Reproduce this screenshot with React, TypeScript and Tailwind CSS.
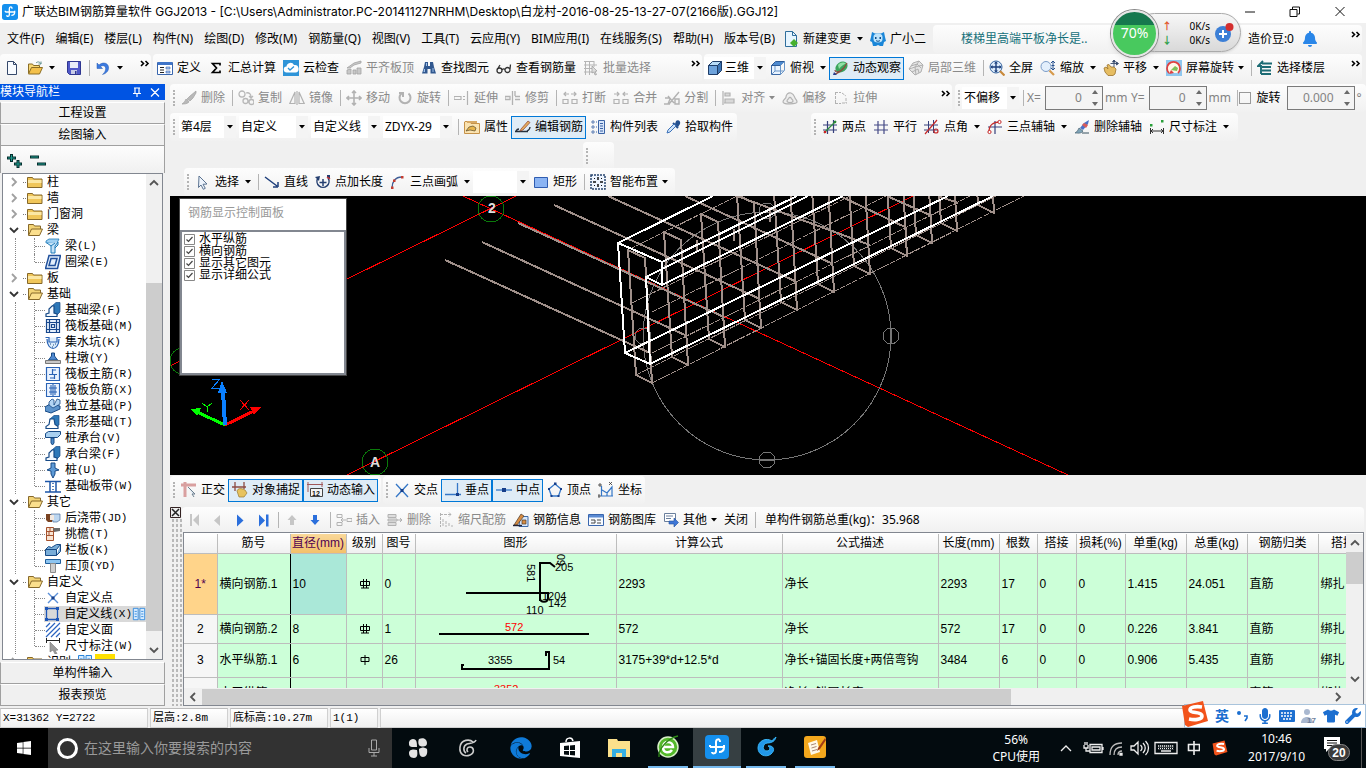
import type { ReactNode } from "react";
import { FaBell, FaEdge, FaMicrophone, FaTshirt, FaWindows, FaWrench } from "react-icons/fa";

const icons: Record<string, ReactNode> = {
  file: <path d="M3.5 1.5h6l3 3v10h-9zM9.5 1.5v3h3" fill="#f8fbff" stroke="#36496b" />,
  open: (
    <>
      <path d="M1.5 13V4h4l1 1.5h6V8" fill="#f7d774" stroke="#8a6d25" />
      <path d="M1.5 14l3-6.5h11L12.500 14z" fill="#f3c04b" stroke="#8a6d25" />
      <path d="M9 3c2-2 4-1 5 1m0-2.500V4h-2.500" fill="none" stroke="#5f8f8f" />
    </>
  ),
  save: (
    <>
      <path d="M1.500 1.500h13v13h-11l-2-2z" fill="#5058c8" stroke="#2f3690" />
      <path d="M4 2h8v6H4z" fill="#e8ecf8" />
      <path d="M5 10h6v4H5z" fill="#c8cce8" />
      <path d="M9 11h1.500v3H9z" fill="#2f3690" />
    </>
  ),
  undo: <path d="M2 3v5.500h5.500L5.500 6.500c3-2 6 0 5 3.500-.5 2-2 3.500-3 4.500 4-1 6.500-4 6-7.500C13 3 8 1.500 4 5z" fill="#3c7be0" stroke="#2459b0" strokeWidth=".5" />,
  define: (
    <>
      <path d="M.5 2.500h15v12H.5z" fill="#fff" stroke="#3966ae" />
      <path d="M1 2h14v3H1z" fill="#3f74c8" />
      <path d="M3 7.500h4M3 10h4M3 12.500h4" stroke="#222" />
      <path d="M9 7h4v2H9zM9 11h4v2H9z" fill="#a9c3ee" stroke="#3966ae" strokeWidth=".6" />
    </>
  ),
  sigma: <path d="M12 5.500V3.500H4.500L8.500 8l-4 4.500H12v-2" fill="none" stroke="#000" strokeWidth="1.700" />,
  cloud: (
    <>
      <path d="M0 0h16v16H0z" fill="#2e94d8" />
      <path d="M4 12.500a3 3 0 0 1-.5-6 4 4 0 0 1 7.500-1.500 3.500 3.500 0 0 1 1.500 7.500z" fill="#fff" />
      <path d="M5 8l2 2 4-3.500" stroke="#2e94d8" fill="none" strokeWidth="1.300" />
    </>
  ),
  slab: <path d="M1 8l7-5 7-2v2L8 5 4 8zM1 10l4-1v5H1zM7 10h3v4H7zM11 8h4v6h-4z" fill="#c8c8c8" stroke="#a2a2a2" strokeWidth=".8" />,
  binoc: (
    <>
      <path d="M4 2h3v4h2V2h3l1 5 2 6.500H9.500V9h-3v4.500H1L3 7z" fill="#31588f" />
      <path d="M3 9h1v3H2.500zM11.500 8h1v4h-1zM5 3h1v3H5z" fill="#9fc0ea" />
    </>
  ),
  glasses: <path d="M1 10.500a2.300 2.300 0 1 0 5 0 2.300 2.300 0 1 0-5 0zm8-.5a2.300 2.300 0 1 0 5 0 2.300 2.300 0 1 0-5 0zM6 10c1-1.500 2-1.500 3-.5M1.500 9L4 5M14 9l.5-4.500" fill="none" stroke="#333" strokeWidth="1.300" />,
  batch: (
    <>
      <path d="M1 1.500h10M1 5h13M1 8.500h8M1 12h8M2.500 1v14M6.500 1v14M11 1v6" stroke="#b5b5b5" />
      <path d="M9 6l5 5-2 .5 1.500 3-1.500.5-1-3-2 1z" fill="#ddd" stroke="#999" strokeWidth=".7" />
    </>
  ),
  cube: (
    <>
      <path d="M1.500 5.500h9v9h-9z" fill="#6ea3dc" stroke="#1f3d68" />
      <path d="M1.500 5.500l4-4h9l-4 4z" fill="#b8dcf8" stroke="#1f3d68" />
      <path d="M10.500 5.500l4-4v9l-4 4z" fill="#3d75b5" stroke="#1f3d68" />
    </>
  ),
  cubetop: (
    <>
      <path d="M1.500 5.500h9v9h-9z" fill="#eaf4ff" stroke="#3c69a5" />
      <path d="M1.500 5.500l4-4h9l-4 4z" fill="#4d8ad0" stroke="#2e5a95" />
      <path d="M10.500 5.500l4-4v9l-4 4zM5 6v5m0 0h9M5 11l-3 3" fill="none" stroke="#6a96c8" />
    </>
  ),
  orbit: (
    <>
      <ellipse cx="8.500" cy="7" rx="6.500" ry="5" fill="#3aa45c" transform="rotate(-35 8.500 7)" />
      <path d="M5 5c3-3 6-3 8-1-2 0-5 2-7 5z" fill="#8fe0a5" />
      <path d="M1 14c4 0 10-5 13-11M2 10c0 3 5 2 8-1" fill="none" stroke="#8c4a3c" strokeWidth="1.200" />
      <path d="M1 12l3 3H0z" fill="#2b3c8a" />
    </>
  ),
  cubegray: <path d="M1 9l4-6 6-2 4 4-2 7-6 3zM1 9l6-2 4-6M7 7l1 8M7 7l8-2M3 6l6-2 4 4M4 12l6-3 1 4" fill="#e4e4e4" stroke="#b0b0b0" />,
  full: (
    <>
      <circle cx="7" cy="7" r="6" fill="#dcebfb" stroke="#34639f" />
      <path d="M11 11l4.500 4.500" stroke="#c8893a" strokeWidth="2.200" />
      <path d="M7 2v10M2 7h10" stroke="#1b3f7c" strokeWidth="1.400" />
      <path d="M7 1.500l2 2H5zM7 12.500l2-2H5zM1.500 7l2-2v4zM12.500 7l-2-2v4z" fill="#1b3f7c" />
    </>
  ),
  zoom: (
    <>
      <circle cx="6" cy="6.500" r="5" fill="#e3effc" stroke="#7a9cc8" />
      <path d="M9.500 10.500L14 15" stroke="#d69a4c" strokeWidth="2.200" />
      <path d="M13 1v8M11 3l2-2 2 2M11.500 5.500h3M11 8l2 2 2-2" stroke="#27508e" fill="none" />
    </>
  ),
  hand: (
    <>
      <path d="M1 8l2-1 2 2-1-4 2-.5L8 7l3 0 2 2-1 5-2 1.500H5L2 12z" fill="#e6bd62" stroke="#9c742c" strokeWidth=".8" />
      <path d="M11 0v7M7.500 3.500h7M11 0L9.500 2h3zM15.500 3.500L13.500 2v3z" stroke="#35496b" fill="#35496b" strokeWidth=".9" />
    </>
  ),
  screenrot: (
    <>
      <path d="M0 0h16v16H0z" fill="#8fc7ee" />
      <path d="M3 13a6.500 6.500 0 1 1 9 0" fill="#fff7e8" stroke="#e04040" strokeWidth="1.800" />
      <path d="M5 10l4-4 3 2-1 3z" fill="#7fbf57" />
      <path d="M3 14l5-1-3-3z" fill="#e04040" />
    </>
  ),
  floors: <path d="M5 3.500h10M5 7h9M5 10.500h9M4 14h10M6 1L1 6h3v8" fill="none" stroke="#1c6b74" strokeWidth="1.900" />,
  erase: <path d="M15 1L9 6 6 9l3 2 3-3 3-5zM5 9l3 3c-2 2-5 2-7 2 2-1 3-3 4-5z" fill="#b9b9b9" stroke="#a2a2a2" strokeWidth=".7" />,
  copy: <path d="M1 4a3 3 0 1 0 6 0 3 3 0 1 0-6 0M5 11a2.500 2.500 0 1 0 5 0 2.500 2.500 0 1 0-5 0M11 12a2.500 2.500 0 1 0 5 0 2.500 2.500 0 1 0-5 0M8 3c3-1 5 1 5 4m-2-1l2 2 2-2" fill="none" stroke="#b8b8b8" strokeWidth="1.300" />,
  mirror: <path d="M6 2v11.500H.8zM10 2v11.500h5.200zM8 1v14" fill="none" stroke="#b2b2b2" strokeWidth="1.200" />,
  move: <path d="M8 1v14M1 8h14M6 3l2-2 2 2M6 13l2 2 2-2M3 6L1 8l2 2M13 6l2 2-2 2" fill="none" stroke="#b2b2b2" strokeWidth="1.600" />,
  rotate: <path d="M4.500 3.500a5.500 5.500 0 1 0 7 0M2 3h4v4" fill="none" stroke="#b2b2b2" strokeWidth="2" />,
  extend: <path d="M0 6.500h7v3H0zM9 6.500h2M9 9.500h2M13.500 1v14" fill="none" stroke="#b2b2b2" strokeWidth="1.200" />,
  trim: <path d="M0 6.500h5v3H0zM7.500 1v14M10 6.500h5M10 9.500h5M10 1v5" fill="none" stroke="#b2b2b2" strokeWidth="1.300" />,
  break: <path d="M1 9.500h5v4H1zM10 9.500h5v4h-5zM7 4H2m2-2L2 4l2 2M9 4h5m-2-2l2 2-2 2" fill="none" stroke="#b2b2b2" strokeWidth="1.200" />,
  merge: <path d="M1 9.500h5v4H1zM10 9.500h5v4h-5zM1 4h5m-2-2l2 2-2 2M15 4h-5m2-2l-2 2 2 2" fill="none" stroke="#b2b2b2" strokeWidth="1.200" />,
  split: <path d="M5 14L15 2M10 13L4 6M1 8h5M0 14h6M11 9h4v5h-4zM6 9L4 14" fill="none" stroke="#b2b2b2" strokeWidth="1.400" />,
  align: <path d="M2 1v14M4 3h5v3H4zM4 9h9v4H4zM3 13h8" fill="#d8d8d8" stroke="#b2b2b2" strokeWidth="1.200" />,
  offset: <path d="M1 12c0-3 3-3 3-5s2-5 5-4 3 3 4 5 2 2 2 4-14 3-14 0zM5 11c0-2 2-2 2-3s2-1 2 0 2 1 2 3-6 2-6 0z" fill="#eee" stroke="#b2b2b2" strokeWidth="1.200" />,
  stretch: <path d="M2.500 2v12M2 2.500h6M2 13.500h6M9 3l4 3M9 13h5M13 8v5" fill="none" stroke="#b2b2b2" strokeDasharray="3 1" />,
  props: (
    <>
      <path d="M.5 3V14.500h15V4.500H7L6 2.500H1z" fill="#fbe3b0" stroke="#c5924a" />
      <path d="M3 2h10v2H3z" fill="#d8a964" />
      <path d="M2 12l3-4 4-1 3 2-1 3-5-1z" fill="#e8b54c" stroke="#55482a" strokeWidth=".7" />
    </>
  ),
  editbar: (
    <>
      <path d="M0 12.500h13M1 12c1-2 2-2 3-2M12 12c2-1 3-3 3-4" stroke="#27303c" fill="none" strokeWidth="1.300" />
      <path d="M6 10L13 2l2 1.500-7 7.500-3 1z" fill="#e4ad5c" stroke="#8e3f30" strokeWidth=".7" />
    </>
  ),
  list: (
    <>
      <path d="M2 2h2v2H2zM2 7h2v2H2zM2 12h2v2H2z" fill="#fff" stroke="#3a63a5" strokeWidth=".8" />
      <path d="M6 3h1M6 8h1M6 13h1" stroke="#3a63a5" />
      <path d="M8.500 1.500h6v13h-6z" fill="#d7e5fa" stroke="#3a63a5" />
      <path d="M10 4.500h3M10 7h3M10 9.500h3M10 12h3" stroke="#3a63a5" />
    </>
  ),
  pick: (
    <>
      <path d="M10 5l3 3 2-3c1-3-2-5-4-3z" fill="#24508f" />
      <path d="M8 4l5 5" stroke="#24508f" strokeWidth="2" />
      <path d="M2 14l1-3 6-6 2 2-6 6z" fill="#cfe4fa" stroke="#3c71b8" />
    </>
  ),
  axis2: (
    <>
      <path d="M5.500 2v13M11.500 1v13M1 6h14M1 11h14" stroke="#36407c" strokeWidth="1.200" />
      <path d="M2 14L14 2" stroke="#2f8f3f" strokeWidth="1.200" />
      <circle cx="3" cy="13" r="1.300" fill="#c22" />
      <circle cx="13" cy="3" r="1.300" fill="#2a8a35" />
    </>
  ),
  parallel: <path d="M5 2v13M11 1v14M1 6h14M1 11h14" stroke="#454a86" strokeWidth="1.200" />,
  corner: (
    <>
      <path d="M4.500 2v12M9.500 1v13M0 6h14M0 11h14" stroke="#36407c" />
      <path d="M1 15L13 1M10 12a2 2 0 1 0 4 0 2 2 0 1 0-4 0" fill="none" stroke="#c52a2a" strokeWidth="1.200" />
    </>
  ),
  arcaxis: (
    <>
      <path d="M8 2v13M1 8h14" stroke="#36407c" strokeWidth="1.200" />
      <path d="M2 13C2 6 6 3 13 3" fill="none" stroke="#c52a2a" strokeWidth="1.300" />
      <circle cx="2.500" cy="13" r="1.600" fill="#fff" stroke="#c52a2a" />
      <circle cx="12.500" cy="3" r="1.600" fill="#fff" stroke="#c52a2a" />
    </>
  ),
  delaxis: (
    <>
      <path d="M15 1L10 4 6 9l3 2 5-6z" fill="#4c71c8" />
      <path d="M10 4l4 2-2 3-4-3z" fill="#d85b5b" />
      <path d="M5 9l4 3c-2 3-5 2-8 2 2-1 3-3 4-5z" fill="#7fa4b8" stroke="#36505f" strokeWidth=".6" />
      <path d="M8 14h7" stroke="#36505f" />
    </>
  ),
  dim: (
    <>
      <path d="M1.500 9v6M14.500 9v6M2 12h12M4 10l-2 2 2 2M12 10l2 2-2 2" fill="none" stroke="#333" />
      <path d="M1 5h2.500v2.500H1zM12 1h2.500v2.500H12z" fill="#2aa03a" />
    </>
  ),
  cursor: <path d="M4 2l8 8-4 .3 2.300 4-2 1L6 11l-2.500 2.500z" fill="#eef4fc" stroke="#5b7391" />,
  line: <path d="M1 3l12 9m1 1V8m0 5H9" fill="none" stroke="#1f3f7c" strokeWidth="1.500" />,
  ptlen: (
    <>
      <path d="M3 4a6 6 0 1 0 10 0M8 5v7M4.500 8.500h7" fill="none" stroke="#253f70" strokeWidth="1.500" />
      <path d="M0 3l5-1-1 5zM12 1h3v3h-3z" fill="#253f70" />
      <path d="M12 3l3 2" stroke="#c33" strokeWidth="1.500" />
    </>
  ),
  arc3: (
    <>
      <path d="M2 14C2 8 5 3 12 3" fill="none" stroke="#3f5f98" strokeWidth="1.300" />
      <path d="M1 12.500h2.500V15H1zM3 5.500h2.500V8H3zM11 2h2.500v2.500H11z" fill="#c33d30" />
    </>
  ),
  rect: <path d="M1.500 3.500h13v10h-13z" fill="#8bb4f3" stroke="#2f5cb0" />,
  smart: (
    <>
      <path d="M1 1h14v14H1z" fill="#eef5ff" stroke="#28466f" strokeDasharray="2 1" strokeWidth="1.500" />
      <path d="M8 3v3M8 10v3M3 8h3M10 8h3" stroke="#111" strokeWidth="1.500" />
      <path d="M4 4h1v1H4zM11 4h1v1h-1zM4 11h1v1H4zM11 11h1v1h-1z" fill="#111" />
    </>
  ),
  newdoc: (
    <>
      <path d="M2.500 .5h7l4 4v11h-11z" fill="#e7f5ff" stroke="#2f6e9c" />
      <path d="M9.500 .5v4h4" fill="none" stroke="#2f6e9c" />
      <path d="M11 8l4 4-4 4-4-4z" fill="#47b02e" />
    </>
  ),
  mascot: (
    <>
      <path d="M2 1l3 1.500h6L14 1l1 5 1 4-2 1-1 4h-3l-2-1-2 1H3l-1-4-2-1 1-4z" fill="#1a86d8" />
      <path d="M3.500 6a4.500 3.500 0 0 1 9 0v2a4.500 3.500 0 0 1-9 0z" fill="#bfe3fa" />
      <path d="M5 6h1.500v2H5zM9.500 6H11v2H9.500z" fill="#0d4f8c" />
      <path d="M6 9.500c1 1 3 1 4 0" stroke="#0d4f8c" fill="none" />
    </>
  ),
  ortho: (
    <>
      <path d="M0 3h15M4 0v15" stroke="#d9a0a0" strokeWidth="3" />
      <path d="M7 5l7 7-3 0 2 3" fill="#dfe8f0" stroke="#6c7f8f" />
    </>
  ),
  snap: (
    <>
      <path d="M0 5h14M3 0v9M12 0v7" stroke="#8d4b43" strokeWidth="1.300" />
      <path d="M5 9c1-3 4-3 8-1l2 3-3 4H7z" fill="#e8c35e" stroke="#9a7a30" strokeWidth=".7" />
    </>
  ),
  dyn: (
    <>
      <path d="M0 2.500h16M1 0v10M15 0v5" stroke="#a0585a" />
      <path d="M3.500 6.500h12v8h-12z" fill="#f4f4f4" stroke="#444" />
      <text x="5" y="13.500" fontSize="7" fontWeight="700" fill="#111" fontFamily="Liberation Sans">12</text>
    </>
  ),
  cross: (
    <>
      <path d="M2 2l12 13M14 2L2 15" stroke="#3577c7" strokeWidth="1.300" />
      <path d="M6.500 7h3v3h-3z" fill="#173f8a" />
    </>
  ),
  perp: (
    <>
      <path d="M0 12.500h16M12.500 1v11" stroke="#3577c7" strokeWidth="1.300" />
      <path d="M11 11h3v3h-3z" fill="#173f8a" />
    </>
  ),
  mid: (
    <>
      <path d="M0 8h16" stroke="#3577c7" strokeWidth="1.300" />
      <path d="M6 6h4v4H6z" fill="#173f8a" />
    </>
  ),
  vertex: (
    <>
      <path d="M8 2l6 5-2.500 7h-7L2 7z" fill="none" stroke="#3577c7" strokeWidth="1.300" />
      <path d="M7 .5h2.500V3H7zM1 6h2v2H1zM13 6h2v2h-2zM3.500 13h2v2h-2zM10.500 13h2v2h-2z" fill="#173f8a" />
    </>
  ),
  coord: (
    <>
      <path d="M3.500 4v10H15M4 8l5 3 5-6v9M9 11v3" fill="none" stroke="#3577c7" strokeWidth="1.200" />
      <path d="M1 2h2v2H1zM11 0l3 3m0-3l-3 3M0 13h2v2H0z" fill="none" stroke="#333" strokeWidth=".8" />
    </>
  ),
  first: <path d="M4 2h2v12H4zM13 2v12L7 8z" fill="#c6c6c6" />,
  prev: <path d="M11 3v11L5 8.500z" fill="#c6c6c6" />,
  next: <path d="M5 2.500v12L11.500 8.500z" fill="#2b6fdc" />,
  last: <path d="M4 2.500v12l6-6zM11 2.500h2.500v12H11z" fill="#2b6fdc" />,
  up: <path d="M8 3l4.500 5H10v5H6V8H3.500z" fill="#c6c6c6" />,
  down: <path d="M8 13l4.500-5H10V3H6v5H3.500z" fill="#2b6fdc" />,
  insert: <path d="M1 2.500h5v3H1zM1 10.500h5v3H1zM11 6.500h5v3h-5zM5 8h5M7 6L5 8l2 2" fill="none" stroke="#b2b2b2" />,
  remove: <path d="M1 2.500h8v3H1zM1 10.500h8v3H1zM1 7h9v2H1zM10 8h5m-2-2l2 2-2 2" fill="#ddd" stroke="#b2b2b2" />,
  scale: <path d="M2.500 1v14M2 2.500h11m-2-2l2 2-2 2M5 7v8M8 9v6M11 11v4M14 13v2" fill="none" stroke="#b2b2b2" strokeDasharray="3 1" />,
  info: (
    <>
      <path d="M7 4.500h8v10H6z" fill="#d9e8fb" stroke="#3e6aa8" />
      <path d="M1 13L8 2l3 2-7 9zM9 8h4v4H9z" fill="#d88c42" stroke="#4c3b2c" strokeWidth=".7" />
      <path d="M0 13.500h9" stroke="#223" strokeWidth="1.400" />
    </>
  ),
  library: (
    <>
      <path d="M.5 2.500h15v11H.5z" fill="#f6faff" stroke="#3966ae" />
      <path d="M1 3h14v2.500H1z" fill="#5b8ad2" />
      <path d="M3 11h4V8H3M9 8h4M9 11h4" fill="none" stroke="#444" />
    </>
  ),
  other: (
    <>
      <path d="M1.500 1.500h11v8h-11z" fill="#fff" stroke="#6a7f9c" />
      <path d="M3 4h7M3 6.500h5" stroke="#6a7f9c" />
      <path d="M6 9h5V6l4.500 4.500L11 15v-3H6z" fill="#3f77d6" stroke="#24509c" strokeWidth=".6" />
    </>
  ),
  folder: (
    <>
      <path d="M.5 13.500v-10h5l1 1.500h8.500v8.500z" fill="#f0c65a" stroke="#86682a" />
      <path d="M1 6h13.500v3H1z" fill="#fbe7a4" />
    </>
  ),
  folderopen: (
    <>
      <path d="M1.500 13V2.500h5l1 1.500h6V7" fill="#f3d477" stroke="#86682a" />
      <path d="M1.500 13.500l3-6.500h11l-3 6.500z" fill="#fbdf8d" stroke="#86682a" />
    </>
  ),
  beam: (
    <>
      <path d="M1 3l3-2h10l-2 4H1z" fill="#9fd0f2" stroke="#1c7ab8" strokeWidth=".8" />
      <path d="M2 5l4 3v7h4V8l3-4M6 8l4-3M10 10l3-3V4" fill="#c5e2f7" stroke="#1c7ab8" />
    </>
  ),
  ring: <path d="M4 1.500h11.500l-3 13H.5zM6 4.500h6l-2 7H4z" fill="#e3effb" stroke="#20509c" strokeWidth="1.500" />,
  fbeam: (
    <>
      <path d="M7 4l4-3.500h4V10l-4 4H7z" fill="#2e78b8" stroke="#174a86" strokeWidth=".7" />
      <path d="M1 14.500V12l3-1V7l3-3h2v7l3 1v2.500z" fill="#f3f9ff" stroke="#174a86" strokeWidth="1.200" />
    </>
  ),
  raft: <path d="M1.500 1.500h13v13h-13zM4.500 1v14M11.500 1v14M1 4.500h14M1 11.500h14M6.500 6.500h3v3h-3z" fill="#e6f1fd" stroke="#17478c" strokeWidth="1.200" />,
  pit: (
    <>
      <path d="M.5 3.500H4V8h8V3.500h3.500M2 5c0 6 3 9.500 6 9.500S14 11 14 5" fill="#dcecfb" stroke="#2a63b5" strokeWidth="1.200" />
      <path d="M5 10h1M8 11h1M10 10h1M7 13h1" stroke="#174a86" />
    </>
  ),
  pier: (
    <>
      <path d="M6.500 3h3v3l3 4h-9l3-4z" fill="#4f89d0" stroke="#174a86" />
      <path d="M.5 10.500h15v3H.5z" fill="#c7c7c7" stroke="#777" />
    </>
  ),
  mainbar: <path d="M1.500 1.500h13v13h-13zM4 8.500h8M7.500 3v5.500M9.500 8.500V13M5 12h4M8 4h3" fill="#eaf3ff" stroke="#2a63b5" strokeWidth="1.200" />,
  negbar: <path d="M1.500 1.500h13v13h-13zM4 6h8M4 10h8M6 3v10M10 3v10M8 1v14" fill="#eaf3ff" stroke="#2a63b5" strokeWidth="1.100" />,
  indep: (
    <>
      <path d="M0 9l5-3 10 2v3l-9 4-6-2z" fill="#5d94cc" stroke="#174a86" />
      <path d="M4 4l3-3 2 1v5l3-6 3 1v4l-7 4-4-3z" fill="#b3d5f3" stroke="#174a86" strokeWidth=".8" />
    </>
  ),
  strip: (
    <>
      <path d="M5 5l4-3.500h5V11l-3 2H7z" fill="#2e78b8" stroke="#174a86" strokeWidth=".7" />
      <path d="M1 14.500v-2l3-2L5 5h4l1 5.500 3 2v2z" fill="#fff" stroke="#174a86" strokeWidth="1.200" />
    </>
  ),
  cap: (
    <>
      <path d="M.5 3.500l3-2h12v3l-3 3H.5z" fill="#a9d0f0" stroke="#174a86" />
      <path d="M6 8h3v5l-1.500 2L6 13z" fill="#4b89c8" stroke="#174a86" />
    </>
  ),
  pile: <path d="M6 1h4v5l4 2-4 1v3l-2 4-2-4V9L2 8l4-2z" fill="#5d9ad6" stroke="#174a86" />,
  band: <path d="M0 3.500h16M0 14h16M5 4v10M11 4v10M8 5v1M8 8v1M8 11v1" fill="none" stroke="#1d56a8" strokeWidth="1.500" />,
  pour: (
    <>
      <path d="M1 4h5l2 2-1 6H3L1 10z" fill="#7a4322" />
      <path d="M6 4h9v6l-3 2H8z" fill="#bcd6f0" stroke="#4a6f9c" strokeWidth=".7" />
      <path d="M5 5h4v5H5z" fill="#f2e8e0" />
    </>
  ),
  eave: (
    <>
      <path d="M1.500 1.500h7v13h-7zM1 5.500h7M1 9.500h7M5 2v3M4 6v4" fill="#f7e3d2" stroke="#a5512c" />
      <path d="M8 2h7v3l-6 1z" fill="#6b6b6b" />
    </>
  ),
  rail: <path d="M.5 13.500v-6h11v6zM.5 7.500l3-3 3 1 5-3h4l-4 5M11.500 13.500l4-4v-7" fill="#79add8" stroke="#174a86" />,
  top: (
    <>
      <path d="M.5 1.500h15v4H.5z" fill="#8cc4f0" stroke="#205f9c" />
      <path d="M5.500 5.500h5v9h-5z" fill="#cfcfcf" stroke="#8c8c8c" />
    </>
  ),
  point: (
    <>
      <path d="M3 3l10 10M13 3L3 13" stroke="#5a8fd8" strokeWidth="1.400" />
      <path d="M6.500 6.500h3v3h-3z" fill="#173f8a" />
    </>
  ),
  polyline: (
    <>
      <path d="M2.500 2.500h11v11h-11z" fill="none" stroke="#1d56b8" strokeWidth="1.300" />
      <path d="M1 1h3v3H1zM12 1h3v3h-3zM1 12h3v3H1zM12 12h3v3h-3z" fill="#1d56b8" />
    </>
  ),
  hatch: <path d="M1 5l4-4M1 10l9-9M1 15L15 1M6 15l9-9M11 15l4-4" stroke="#2a63c0" strokeWidth="1.200" />,
  dimpick: (
    <>
      <path d="M1.500 0v5M14.500 0v5M2 2.500h12" stroke="#222" />
      <path d="M5 4l8 8-3 .5 2 3-2 .5-2-4-3 2z" fill="#9c9c9c" stroke="#777" strokeWidth=".6" />
    </>
  ),
  ctrlbadge: <path d="M1.500 1.500h5.500v13H1.500zM9 1.500h5.500v13H9zM3 5h2.500M3 8h2.500M3 11h2.500M10.500 5H13M10.500 8H13M10.500 11H13" fill="#d8ecff" stroke="#2a86dc" />,
};

const Ico = ({ name, className = "h-4 w-4" }: { name: string; className?: string }) => (
  <svg viewBox="0 0 16 16" className={`shrink-0 ${className}`} aria-hidden="true">
    {icons[name]}
  </svg>
);

const Caret = () => (
  <svg viewBox="0 0 6 4" className="h-1 w-1.5 shrink-0" aria-hidden="true">
    <path d="M0 0h6L3 3.500z" fill="currentColor" />
  </svg>
);

const More = () => (
  <button aria-label="»" className="mb-2 h-3 w-3">
    <svg viewBox="0 0 12 12" className="h-3 w-3">
      <path d="M2 3l2.500 2.500L2 8M6.500 3L9 5.500 6.500 8" fill="none" stroke="#000" strokeWidth="1.600" />
    </svg>
  </button>
);

const Bar = ({ children, className = "" }: { children?: ReactNode; className?: string }) => (
  <div className={`flex h-7 items-center rounded-sm bg-linear-to-b from-[#fdfdfd] to-[#f1f1f1] ${className}`}>{children}</div>
);

const Grip = () => (
  <span className="flex w-[7px] shrink-0 justify-center">
    <span className="h-4 border-l-2 border-dotted border-[#b4b4b4]" />
  </span>
);

const Sep = () => (
  <span className="flex w-[6px] shrink-0 justify-end pr-px">
    <span className="h-4 w-px bg-[#b4b4b4]" />
  </span>
);

type ToolProps = { icon?: string; label?: string; active?: boolean; off?: boolean; drop?: "near" | "far" };

const Tool = ({ icon, label, active, off, drop }: ToolProps) => (
  <button
    disabled={off}
    aria-label={label ?? icon}
    className={`flex h-[23px] shrink-0 items-center gap-1 pr-[3px] pl-1 leading-4 ${off ? "text-[#8a8a8a]" : "text-black"} ${
      active ? "bg-[#dfecf6] outline outline-1 -outline-offset-1 outline-[#0078d7]" : ""
    }`}
  >
    {icon && <Ico name={icon} />}
    {label && <span>{label}</span>}
    {drop === "near" && <Caret />}
    {drop === "far" && (
      <span className="flex w-2 justify-end">
        <Caret />
      </span>
    )}
  </button>
);

const Combo = ({ value, label, className = "", icon }: { value: string; label: string; className?: string; icon?: string }) => (
  <div className={`relative flex h-[22px] shrink-0 items-center bg-white ${className}`}>
    {icon && (
      <span className="pl-[3px]">
        <Ico name={icon} />
      </span>
    )}
    <select aria-label={label} className="h-full w-full appearance-none bg-transparent pl-0.5 leading-4 outline-none">
      <option>{value}</option>
    </select>
    <span className="pointer-events-none absolute inset-y-0 right-0 flex w-3 items-center justify-center bg-[#f4f4f4]">
      <Caret />
    </span>
  </div>
);

const Spin = ({ id, value, className }: { id: string; value: string; className: string }) => (
  <div className={`flex h-6 shrink-0 items-center border border-[#7a7a7a] bg-[#f4f4f4] ${className}`}>
    <input id={id} defaultValue={value} className="w-full min-w-0 bg-transparent pr-2 text-right text-[#838383] outline-none" />
    <svg viewBox="0 0 10 18" className="h-[18px] w-3 shrink-0" aria-hidden="true">
      <path d="M1 5h6L4 1zM1 13h6l-3 4z" fill="#6a6a6a" />
    </svg>
  </div>
);

const menus = ["文件(F)", "编辑(E)", "楼层(L)", "构件(N)", "绘图(D)", "修改(M)", "钢筋量(Q)", "视图(V)", "工具(T)", "云应用(Y)", "BIM应用(I)", "在线服务(S)", "帮助(H)", "版本号(B)"];

const logoArt = (
  <>
    <rect width="24" height="24" rx="4" fill="#1590ee" />
    <path d="M15 7c0-4-4-3-4 0v9c0 3-4 3-4 1M5 12h14v-2M19 12c0 4-2 5-5 5M5 12v-2" fill="none" stroke="#fff" strokeWidth="2" />
  </>
);

const TitleBar = () => (
  <header className="flex h-[23px] shrink-0 items-center bg-white pr-5 pl-0.5">
    <svg viewBox="0 0 24 24" className="h-4 w-4 shrink-0" aria-hidden="true">
      {logoArt}
    </svg>
    <h1 className="ml-1 flex-1 truncate font-['Inter','Noto_Sans_CJK_SC',sans-serif]">
      广联达BIM钢筋算量软件 GGJ2013 - [C:\Users\Administrator.PC-20141127NRHM\Desktop\白龙村-2016-08-25-13-27-07(2166版).GGJ12]
    </h1>
    <div className="flex gap-[33px]">
      {["M1 6h10", "M1 3.500h7v7H1zM3.500 3V1h7v7H8.500", "M1.500 1l9 9M10.500 1l-9 9"].map((d, i) => (
        <button key={d} aria-label={["最小化", "还原", "关闭"][i]} className="h-3 w-3">
          <svg viewBox="0 0 12 12">
            <path d={d} fill="none" stroke="#111" />
          </svg>
        </button>
      ))}
    </div>
  </header>
);

const MenuBar = () => (
  <nav className="flex h-[31px] shrink-0 items-center pr-1 pl-[7px]">
    <div className="flex shrink-0 items-center gap-[11px]">
      {menus.map((m) => (
        <button key={m} className="leading-4">
          {m}
        </button>
      ))}
    </div>
    <span className="ml-1 flex">
      <Tool icon="newdoc" label="新建变更" drop="far" />
      <Tool icon="mascot" label="广小二" />
    </span>
    <Bar className="ml-1 flex-1 justify-between pl-7">
      <a href="#" className="text-[#15707a]">
        楼梯里高端平板净长是..
      </a>
      <span className="flex items-center gap-2">
        <span>造价豆:0</span>
        <FaBell className="mr-6 h-4 w-4 text-[#2a86e8]" />
        <More />
      </span>
    </Bar>
  </nav>
);

const Gauge = () => (
  <div className="absolute top-[9px] right-[125px] z-20 flex h-12 w-[130px] items-center">
    <div className="absolute top-1 right-0 left-6 h-[39px] rounded-full border border-[#aaa] bg-linear-to-b from-[#f7f7f7] to-[#d9d9d9] shadow" />
    <div className="relative flex h-[47px] w-[47px] items-center justify-center rounded-full border-2 border-[#e6e6e6] bg-linear-to-b from-[#16784e] from-30% to-[#48c95e] to-30% text-sm text-white shadow-md ring-1 ring-[#888]">
      70%
    </div>
    <div className="relative ml-1 flex w-12 flex-col gap-0.5 text-[10px] leading-3 text-black">
      <span className="flex justify-between">
        <i className="font-bold text-[#e2572c] not-italic">↑</i>0K/s
      </span>
      <span className="flex justify-between">
        <i className="font-bold text-[#2fa04a] not-italic">↓</i>0K/s
      </span>
    </div>
    <svg viewBox="0 0 20 20" className="relative ml-1 h-5 w-5" aria-hidden="true">
      <circle cx="9" cy="11" r="8" fill="#3c7fd6" />
      <path d="M9 7v8M5 11h8" stroke="#fff" strokeWidth="2" />
      <circle cx="15.500" cy="4" r="4" fill="#d42f2f" />
    </svg>
  </div>
);

const MainTools = () => (
  <div className="flex h-[30px] shrink-0 gap-0.5 pr-1">
    <Bar className="w-[151px]">
      <Tool icon="file" />
      <Tool icon="open" drop="far" />
      <span className="w-1" />
      <Tool icon="save" />
      <Sep />
      <Tool icon="undo" drop="far" />
      <span className="ml-auto" />
      <More />
    </Bar>
    <Bar className="w-[549px]">
      <Tool icon="define" label="定义" />
      <Tool icon="sigma" label="汇总计算" />
      <Tool icon="cloud" label="云检查" />
      <Tool icon="slab" label="平齐板顶" off />
      <Tool icon="binoc" label="查找图元" />
      <Tool icon="glasses" label="查看钢筋量" />
      <Tool icon="batch" label="批量选择" off />
      <span className="ml-auto" />
      <More />
    </Bar>
    <Bar className="flex-1">
      <Combo icon="cube" value="三维" label="视图" className="w-[62px]" />
      <Tool icon="cubetop" label="俯视" drop="far" />
      <Tool icon="orbit" label="动态观察" active />
      <Tool icon="cubegray" label="局部三维" off />
      <Sep />
      <Tool icon="full" label="全屏" />
      <Tool icon="zoom" label="缩放" drop="far" />
      <Tool icon="hand" label="平移" drop="far" />
      <Tool icon="screenrot" label="屏幕旋转" drop="near" />
      <Sep />
      <Tool icon="floors" label="选择楼层" />
      <span className="ml-auto" />
      <More />
    </Bar>
  </div>
);

const EditTools = () => (
  <div className="flex h-[29px] gap-[3px]">
    <Bar className="w-[782px]">
      <Grip />
      <Tool icon="erase" label="删除" off />
      <Sep />
      <Tool icon="copy" label="复制" off />
      <Tool icon="mirror" label="镜像" off />
      <Sep />
      <Tool icon="move" label="移动" off />
      <Tool icon="rotate" label="旋转" off />
      <Sep />
      <Tool icon="extend" label="延伸" off />
      <Tool icon="trim" label="修剪" off />
      <Sep />
      <Tool icon="break" label="打断" off />
      <Tool icon="merge" label="合并" off />
      <Tool icon="split" label="分割" off />
      <Sep />
      <Tool icon="align" label="对齐" off drop="near" />
      <Tool icon="offset" label="偏移" off />
      <Tool icon="stretch" label="拉伸" off />
      <span className="ml-auto" />
      <More />
    </Bar>
    <Bar className="flex-1 text-[#838383]">
      <Grip />
      <Combo value="不偏移" label="偏移方式" className="w-[57px] text-black" />
      <Sep />
      <label htmlFor="offx" className="mr-1 ml-0.5">X=</label>
      <Spin id="offx" value="0" className="w-[58px]" />
      <span className="mx-0.5 w-6">mm</span>
      <label htmlFor="offy" className="mr-1">Y=</label>
      <Spin id="offy" value="0" className="w-[58px]" />
      <span className="ml-0.5 w-6">mm</span>
      <Sep />
      <input id="rot" type="checkbox" className="h-3 w-3 appearance-none border border-[#999]" />
      <label htmlFor="rot" className="mx-1.5 text-black">旋转</label>
      <Spin id="angle" value="0.000" className="w-[68px]" />
      <label htmlFor="angle" className="ml-0.5">°</label>
    </Bar>
  </div>
);

const ComponentTools = () => (
  <div className="flex h-[29px] gap-[74px]">
    <Bar className="w-[567px]">
      <Grip />
      <div className="ml-0.5 flex gap-[3px]">
        <Combo value="第4层" label="楼层" className="w-[57px]" />
        <Combo value="自定义" label="类别" className="w-[69px]" />
        <Combo value="自定义线" label="类型" className="w-[69px]" />
        <Combo value="ZDYX-29" label="构件" className="w-[69px]" />
      </div>
      <span className="w-0.5" />
      <Sep />
      <Tool icon="props" label="属性" />
      <Tool icon="editbar" label="编辑钢筋" active />
      <Tool icon="list" label="构件列表" />
      <Tool icon="pick" label="拾取构件" />
    </Bar>
    <Bar className="pr-1.5">
      <Grip />
      <Tool icon="axis2" label="两点" />
      <Tool icon="parallel" label="平行" />
      <Tool icon="corner" label="点角" drop="far" />
      <Tool icon="arcaxis" label="三点辅轴" drop="far" />
      <Tool icon="delaxis" label="删除辅轴" />
      <Tool icon="dim" label="尺寸标注" drop="far" />
    </Bar>
  </div>
);

const DrawTools = () => (
  <div className="flex h-7 pl-[14px]">
    <Bar className="pr-1">
      <Grip />
      <Tool icon="cursor" label="选择" drop="far" />
      <Sep />
      <Tool icon="line" label="直线" />
      <Tool icon="ptlen" label="点加长度" />
      <Tool icon="arc3" label="三点画弧" drop="far" />
      <Combo value="" label="画弧方式" className="w-[56px]" />
      <Tool icon="rect" label="矩形" />
      <Sep />
      <Tool icon="smart" label="智能布置" drop="near" />
    </Bar>
  </div>
);

type Leaf = [icon: string, name: string, key?: string];
const tree: { name: string; items?: Leaf[] }[] = [
  { name: "柱" },
  { name: "墙" },
  { name: "门窗洞" },
  { name: "梁", items: [["beam", "梁", "(L)"], ["ring", "圈梁", "(E)"]] },
  { name: "板" },
  {
    name: "基础",
    items: [
      ["fbeam", "基础梁", "(F)"],
      ["raft", "筏板基础", "(M)"],
      ["pit", "集水坑", "(K)"],
      ["pier", "柱墩", "(Y)"],
      ["mainbar", "筏板主筋", "(R)"],
      ["negbar", "筏板负筋", "(X)"],
      ["indep", "独立基础", "(P)"],
      ["strip", "条形基础", "(T)"],
      ["cap", "桩承台", "(V)"],
      ["fbeam", "承台梁", "(F)"],
      ["pile", "桩", "(U)"],
      ["band", "基础板带", "(W)"],
    ],
  },
  { name: "其它", items: [["pour", "后浇带", "(JD)"], ["eave", "挑檐", "(T)"], ["rail", "栏板", "(K)"], ["top", "压顶", "(YD)"]] },
  { name: "自定义", items: [["point", "自定义点"], ["polyline", "自定义线", "(X)"], ["hatch", "自定义面"], ["dimpick", "尺寸标注", "(W)"]] },
  { name: "识别" },
];

const Chevron = ({ d, className = "" }: { d: string; className?: string }) => (
  <svg viewBox="0 0 10 10" className={`h-[10px] w-[10px] shrink-0 ${className}`} aria-hidden="true">
    <path d={d} fill="none" stroke="currentColor" strokeWidth="1.800" />
  </svg>
);

const Tree = () => (
  <ul className="min-w-0 flex-1 overflow-hidden">
    {tree.map((g) => (
      <li key={g.name}>
        <button className="flex h-4 items-center">
          <Chevron d={g.items ? "M1 3l4 4 4-4" : "M3 1l4 4-4 4"} className={`ml-1.5 ${g.items ? "text-[#333]" : "text-[#a0a0a0]"}`} />
          <span className="mr-px ml-1 w-[3px] border-t border-dotted border-[#777]" />
          <Ico name={g.items ? "folderopen" : "folder"} />
          <span className="ml-1 leading-4">{g.name}</span>
          {g.name === "识别" && (
            <>
              <Ico name="ctrlbadge" className="ml-1.5 h-4 w-4" />
              <span className="ml-0.5 h-4 w-5 bg-[#ffe000]" />
            </>
          )}
        </button>
        {g.items && (
          <ul className="ml-3 border-l border-dotted border-[#888] pl-[18px]">
            {g.items.map(([icon, name, key], i) => (
              <li key={name} className="flex h-4">
                <span className={`w-px border-l border-dotted border-[#888] ${i === g.items!.length - 1 ? "h-2" : "h-4"}`} />
                <span className="mt-2 w-[10px] border-t border-dotted border-[#888]" />
                <button className={`flex flex-1 items-center whitespace-nowrap ${name === "自定义线" ? "bg-[#d9d9d9]" : ""}`}>
                  <Ico name={icon} />
                  <span className="ml-1 leading-4">{name}</span>
                  {key && <span className="font-['Liberation_Mono'] text-[11px] leading-4">{key}</span>}
                  {name === "自定义线" && <Ico name="ctrlbadge" className="h-[14px] w-[14px]" />}
                </button>
              </li>
            ))}
          </ul>
        )}
      </li>
    ))}
  </ul>
);

const navButton = "h-[22px] w-full shrink-0 border border-[#a0a0a0] border-t-white bg-[#f0f0f0] leading-4";

const Sidebar = () => (
  <aside className="flex w-[165px] shrink-0 flex-col">
    <div className="mb-0.5 flex h-4 shrink-0 items-center bg-[#0054e3] pr-1 text-white">
      <h2 className="flex-1 text-xs leading-4">模块导航栏</h2>
      <svg viewBox="0 0 30 12" className="h-3 w-[30px]" aria-hidden="true">
        <path d="M3 2h6M4 2v5M8 2v5M2 7.500h8M6 8v3M20 2.500l8 8M28 2.500l-8 8" fill="none" stroke="#fff" strokeWidth="1.200" />
      </svg>
    </div>
    <button className={navButton}>工程设置</button>
    <button className={navButton}>绘图输入</button>
    <div className="flex h-[27px] shrink-0 items-center border-x border-[#a0a0a0] bg-linear-to-b from-[#fdfdfd] to-[#f0f0f0] pl-1">
      <svg viewBox="0 0 42 16" className="h-4 w-[42px]" aria-hidden="true">
        <path d="M2 6h9M6.500 2v8M9 12h8M13 8v8M25 5h9M32 12h9" stroke="#062e2e" strokeWidth="3" />
        <path d="M3 6h7M6.500 3v6M10 12h6M13 9v6M26 5h7M33 12h7" stroke="#1c9a8c" />
      </svg>
    </div>
    <div className="mx-0.5 flex min-h-0 flex-1 border border-[#828790] bg-white">
      <Tree />
      <div className="flex w-4 flex-col items-center bg-[#f0f0f0] py-1 text-[#555]">
        <Chevron d="M1 7l4-4 4 4" />
        <div className="mt-[95px] mb-[14px] w-full flex-1 bg-[#cdcdcd]" />
        <Chevron d="M1 3l4 4 4-4" />
      </div>
    </div>
    <div className="h-0.5 shrink-0" />
    <button className={navButton}>单构件输入</button>
    <button className={navButton}>报表预览</button>
  </aside>
);

// stirrup positions along the beam
const stirrups = [[0, 0], [36, -18], [73, -36], [109, -55], [145, -73], [182, -91], [218, -109], [255, -127], [280, -140], [305, -152], [342, -170]];
const rods = [
  [445, 260, 650, 353], [482, 242, 687, 336], [518, 223, 724, 317], [554, 205, 760, 299], [608, 196, 797, 282],
  [685, 196, 833, 264], [737, 196, 870, 245], [840, 196, 907, 228], [887, 196, 932, 216], [938, 196, 958, 203],
];
const thinRods = [[652, 383, 1024, 196], [636, 375, 996, 196], [652, 353, 970, 196], [632, 303, 850, 196], [652, 312, 886, 196], [630, 249, 737, 196]];

const Scene = () => (
  <svg className="absolute inset-0 h-full w-full" shapeRendering="crispEdges" fill="none" aria-label="三维视图">
    <g transform="translate(-170 -196)">
      <path d="M170 366L516 196M463 196L1068 475M347 475L913 196" stroke="#f00" />
      <g stroke="#0a7a0a">
        <circle cx="491" cy="209" r="13" />
        <circle cx="375" cy="462" r="13" />
        <circle cx="183" cy="361" r="13" />
      </g>
      <g stroke="#777">
        <circle cx="767" cy="336" r="124" />
        <circle cx="767" cy="460" r="8" />
        <circle cx="891" cy="336" r="8" />
        <circle cx="643" cy="336" r="8" />
        <circle cx="767" cy="211" r="8" />
        <path d="M759 460h16M891 328v16M643 328v16" />
      </g>
      <g stroke="#a0908a">
        {thinRods.map(([a, b, c, d]) => (
          <path key={`${a}-${b}`} d={`M${a} ${b}L${c} ${d}`} strokeDasharray="6 1" />
        ))}
      </g>
      <g stroke="#a0908a" strokeWidth="2">
        {rods.map(([a, b, c, d]) => (
          <path key={a} d={`M${a} ${b}L${c} ${d}`} />
        ))}
        {stirrups.map(([x, y]) => (
          <path key={x} transform={`translate(${x} ${y})`} d="M628 250L636 375L652 383L645 258z" />
        ))}
        <path d="M697 240v12M734 229v12M770 210v12" />
      </g>
      <path d="M713 196L618 243L625 353L650 364L646 277L662 285V262L618 243M662 262L797 196M646 277L808 196M662 285L843 196M625 353L948 196M650 364L993 196" stroke="#fff" strokeWidth="2" />
      <path d="M225 425L197 412" stroke="#0f0" strokeWidth="3" />
      <path d="M225 425L254 411" stroke="#f00" strokeWidth="3" />
      <path d="M225 425L223 392" stroke="#0a80ff" strokeWidth="4" />
      <path d="M222 381l5 12h-9z" fill="#0a80ff" />
      <path d="M191 409l10-1-4 8z" fill="#0f0" />
      <path d="M261 407l-11 0 4 8z" fill="#f00" />
      <path d="M212 379h8l-8 9h9" stroke="#0a80ff" />
      <path d="M202 403l5 4 5-4M207 407v5" stroke="#0f0" />
      <path d="M240 400l9 10M249 400l-9 10" stroke="#f00" />
      <g fill="#ddd" fontFamily="Liberation Sans" fontSize="14" fontWeight="700" textAnchor="middle">
        <text x="492" y="213">2</text>
        <text x="375" y="467">A</text>
      </g>
    </g>
  </svg>
);

const ControlPanel = () => (
  <section className="absolute top-[2px] left-[9px] flex h-[178px] w-[168px] flex-col border border-[#444] bg-white">
    <h3 className="h-[31px] pt-1.5 pl-2 leading-4 text-[#999]">钢筋显示控制面板</h3>
    <div className="flex-1 border-2 border-[#828790] pt-px pl-0.5">
      {["水平纵筋", "横向钢筋", "显示其它图元", "显示详细公式"].map((t) => (
        <label key={t} className="flex h-3 items-center gap-1 leading-3">
          <input type="checkbox" defaultChecked className="peer sr-only" />
          <svg viewBox="0 0 11 11" className="h-[11px] w-[11px]" aria-hidden="true">
            <path d="M.5 .5h10v10H.5z" fill="#fff" stroke="#888" />
            <path d="M2.500 5.500l2 2 4-4.500" fill="none" stroke="#444" strokeWidth="1.200" />
          </svg>
          {t}
        </label>
      ))}
    </div>
  </section>
);

const SnapBar = () => (
  <div className="flex h-8 shrink-0 gap-0.5 pt-px">
    <Bar className="w-[211px]">
      <Grip />
      <Tool icon="ortho" label="正交" />
      <Tool icon="snap" label="对象捕捉" active />
      <Tool icon="dyn" label="动态输入" active />
    </Bar>
    <Bar>
      <Grip />
      <Tool icon="cross" label="交点" />
      <Tool icon="perp" label="垂点" active />
      <Tool icon="mid" label="中点" active />
      <Tool icon="vertex" label="顶点" />
      <Tool icon="coord" label="坐标" />
    </Bar>
  </div>
);

const Grade = ({ ribbed }: { ribbed?: boolean }) => (
  <svg viewBox="0 0 10 10" className="mx-auto h-[10px] w-[10px]" fill="none" stroke="#000" aria-label={ribbed ? "HRB" : "HPB"}>
    {ribbed ? <path d="M.5 2.500h9v4h-9zM3.500 0v9M6.500 0v9M1 9h8" /> : <path d="M1 2.500h8v4H1zM5 0v10" />}
  </svg>
);

const Figure = ({ height, children }: { height: number; children: ReactNode }) => (
  <svg width="200" height={height} className="block" fill="none" stroke="#000" strokeWidth="2" fontFamily="Liberation Sans" fontSize="11">
    {children}
  </svg>
);

const lbl = { fill: "#000", stroke: "none" };

const columns: [string, string][] = [
  ["", "w-[33px]"], ["筋号", "w-[73px]"], ["直径(mm)", "w-[56px]"], ["级别", "w-[36px]"], ["图号", "w-[33px]"], ["图形", "w-[201px]"],
  ["计算公式", "w-[166px]"], ["公式描述", "w-[156px]"], ["长度(mm)", "w-[61px]"], ["根数", "w-[38px]"], ["搭接", "w-[39px]"], ["损耗(%)", "w-[49px]"],
  ["单重(kg)", "w-[61px]"], ["总重(kg)", "w-[61px]"], ["钢筋归类", "w-[71px]"], ["搭接形式", "w-[74px]"],
];

const rows: { height: string; cells: ReactNode[] }[] = [
  {
    height: "h-[61px]",
    cells: [
      "1*", "横向钢筋.1", "10", <Grade ribbed />, "0",
      <Figure height={60}>
        <path d="M50 39h78M124 47V9h10l5 4M124 44c0 5 8 5 8 0v-5h-6" />
        <g {...lbl}>
          <text x="139" y="17">205</text>
          <text x="126" y="46">1204</text>
          <text x="132" y="53">142</text>
          <text x="110" y="60">110</text>
          <text transform="translate(111 10) rotate(90)">581</text>
          <text transform="translate(149 12) rotate(-90)">60</text>
        </g>
      </Figure>,
      "2293", "净长", "2293", "17", "0", "0", "1.415", "24.051", "直筋", "绑扎",
    ],
  },
  {
    height: "h-[29px]",
    cells: [
      "2", "横向钢筋.2", "8", <Grade ribbed />, "1",
      <Figure height={28}>
        <path d="M23 19h150" />
        <text x="89" y="16" fill="#f00" stroke="none">572</text>
      </Figure>,
      "572", "净长", "572", "17", "0", "0", "0.226", "3.841", "直筋", "绑扎",
    ],
  },
  {
    height: "h-[34px]",
    cells: [
      "3", "水平纵筋.1", "6", <Grade />, "26",
      <Figure height={33}>
        <path d="M48 21h-2v4h87V8h-3v4" />
        <g {...lbl}>
          <text x="72" y="20">3355</text>
          <text x="137" y="20">54</text>
        </g>
      </Figure>,
      "3175+39*d+12.5*d", "净长+锚固长度+两倍弯钩", "3484", "6", "0", "0", "0.906", "5.435", "直筋", "绑扎",
    ],
  },
  {
    height: "h-[31px]",
    cells: [
      "4", "水平纵筋.2", "8", <Grade ribbed />, "1",
      <Figure height={30}>
        <text x="78" y="15" fill="#f00" stroke="none">3352</text>
      </Figure>,
      "3352", "净长+锚固长度", "3352", "2", "0", "0", "1.324", "2.648", "直筋", "绑扎",
    ],
  },
];

const RebarTable = () => (
  <div className="ml-px flex h-[174px] shrink-0 flex-col border border-[#828790] bg-white pt-px">
    <div className="flex min-h-0 flex-1">
      <div className="min-w-0 flex-1 overflow-hidden">
        <table className="w-[1208px] min-w-full table-fixed border-collapse font-['Liberation_Sans','Noto_Sans_CJK_SC',sans-serif]">
          <thead>
            <tr className="h-[19px]">
              {columns.map(([c, w], i) => (
                <th
                  key={c}
                  className={`${w} overflow-hidden border-r border-b border-[#bdbdbd] p-0 leading-4 font-normal whitespace-nowrap ${
                    i === 2 ? "bg-linear-to-b from-[#f9d899] to-[#f3c069] text-[#500050]" : "bg-linear-to-b from-white to-[#f0f0f0]"
                  }`}
                >
                  {c}
                </th>
              ))}
            </tr>
          </thead>
          <tbody>
            {rows.map(({ height, cells }, r) => (
              <tr key={r} className={height}>
                {cells.map((c, i) => {
                  let look = "bg-[#ccffd8] pl-0.5";
                  if (i === 0) look = r === 0 ? "bg-[#ffd48a] text-center text-[#500050]" : "bg-[#f6f6f6] text-center";
                  if (i === 1) look = "border-r-black bg-[#ccffd8] pl-0.5";
                  if (i === 2 && r === 0) look = "bg-[#aae8d8] pl-0.5";
                  if (i === 5) look = "bg-[#ccffd8]";
                  return (
                    <td key={i} className={`overflow-hidden border-r border-b border-[#bdbdbd] p-0 leading-4 whitespace-nowrap ${look}`}>
                      {c}
                    </td>
                  );
                })}
              </tr>
            ))}
          </tbody>
        </table>
      </div>
      <div className="flex w-[17px] flex-col items-center bg-[#f0f0f0] py-1 text-[#555]">
        <Chevron d="M1 7l4-4 4 4" />
        <div className="mt-1 h-8 w-full bg-[#cdcdcd]" />
        <Chevron d="M1 3l4 4 4-4" className="mt-auto" />
      </div>
    </div>
    <div className="flex h-[17px] shrink-0 items-center bg-[#f0f0f0] pr-5 pl-1 text-[#555]">
      <Chevron d="M7 1L3 5l4 4" />
      <div className="ml-1 h-4 w-[70%] bg-[#cdcdcd]" />
      <Chevron d="M3 1l4 4-4 4" className="ml-auto" />
    </div>
  </div>
);

const RebarPane = () => (
  <div className="flex shrink-0">
    <div className="flex w-3 shrink-0 flex-col">
      <button aria-label="关闭编辑钢筋">
        <svg viewBox="0 0 11 11" className="h-[11px] w-[11px]">
          <path d="M.5 .5h10v10H.5z" fill="#eee" stroke="#322" />
          <path d="M2 2l7 7M9 2L2 9" stroke="#222" strokeWidth="1.500" />
        </svg>
      </button>
      <div className="ml-px flex-1 bg-[radial-gradient(#b8b8b8_1px,transparent_1px)] bg-size-[4px_5px]" />
    </div>
    <div className="mr-0.5 min-w-0 flex-1">
      <Bar className="h-[25px]">
        <Tool icon="first" off />
        <Tool icon="prev" off />
        <Tool icon="next" />
        <Tool icon="last" />
        <Sep />
        <Tool icon="up" off />
        <Tool icon="down" />
        <Sep />
        <Tool icon="insert" label="插入" off />
        <Tool icon="remove" label="删除" off />
        <Tool icon="scale" label="缩尺配筋" off />
        <Tool icon="info" label="钢筋信息" />
        <Tool icon="library" label="钢筋图库" />
        <Tool icon="other" label="其他" drop="near" />
        <Tool label="关闭" />
        <Sep />
        <span className="ml-2">单构件钢筋总重(kg)：35.968</span>
      </Bar>
      <RebarTable />
    </div>
  </div>
);

const StatusBar = () => {
  const cell = "flex items-center border border-[#d0d0d0] border-t-[#bbb] bg-linear-to-b from-white to-[#f0f0f0] pl-0.5";
  return (
    <footer className="flex h-[22px] shrink-0 gap-0.5 pt-0.5 font-['Liberation_Mono','Noto_Sans_CJK_SC',monospace] text-[11px]">
      <span className={`${cell} w-[148px]`}>X=31362 Y=2722</span>
      <span className={`${cell} w-[78px]`}>层高:2.8m</span>
      <span className={`${cell} w-[98px]`}>底标高:10.27m</span>
      <span className={`${cell} w-[48px]`}>1(1)</span>
      <span className={`${cell} flex-1`} />
    </footer>
  );
};

const Sogou = ({ className }: { className: string }) => (
  <svg viewBox="0 0 28 28" className={`shrink-0 ${className}`} aria-hidden="true">
    <path d="M1 6l21-5 5 20-20 6-3-2z" fill="#f2531b" />
    <path d="M21 7c-6-1-12 0-12 3 0 4 12 1 12 6 0 4-8 4-13 3" fill="none" stroke="#fff" strokeWidth="3.600" />
  </svg>
);

const ImeBar = () => (
  <div className="absolute right-0 bottom-10 z-10 flex h-[24px] items-center gap-1.5 border border-[#a9c4dc] bg-white pr-1 text-[#1c6fd0]">
    <Sogou className="-mt-1 -ml-1 h-7 w-7" />
    <b className="text-sm leading-4">英</b>
    <svg viewBox="0 0 16 16" className="h-4 w-4" aria-hidden="true">
      <circle cx="4" cy="5" r="2" fill="currentColor" />
      <path d="M9 8h3v2l-2 3" fill="none" stroke="currentColor" strokeWidth="1.600" />
    </svg>
    <FaMicrophone className="h-4 w-4" />
    <svg viewBox="0 0 16 12" className="h-3 w-4" aria-hidden="true">
      <rect width="16" height="12" rx="1" fill="currentColor" />
      <path d="M2 3h12M2 6h12M4 9h8" stroke="#fff" strokeWidth="1.600" strokeDasharray="2 1" />
    </svg>
    <svg viewBox="0 0 16 16" className="h-4 w-4 text-[#a9b8d0]" aria-hidden="true">
      <circle cx="6" cy="4" r="3" fill="currentColor" />
      <path d="M0 15c0-8 12-8 12 0z" fill="currentColor" />
      <text x="6" y="15" fontSize="8" fontWeight="700" fill="#6d7f9c" fontFamily="Liberation Sans">17</text>
    </svg>
    <FaTshirt className="h-4 w-4" />
    <FaWrench className="h-4 w-4" />
  </div>
);

type Task = { name: string; art: ReactNode; open?: boolean; active?: boolean };

const toolTasks: Task[] = [
  {
    name: "应用",
    art: (
      <g fill="#e4e4e4">
        <path d="M3 8a4 4 0 0 1 4-5c4 0 4 4 4 8-3 0-8 1-8-3zM13 3c4-2 8 0 8 4s-4 4-7 3c-2-1-2-5-1-7zM21 13c1 5-1 8-4 8s-4-3-4-8c3-2 5-2 8 0zM11 14c1 5 0 8-3 8-4 0-5-3-5-5 0-4 5-4 8-3z" />
      </g>
    ),
  },
  { name: "广联达", art: <path d="M18 6c-3-3-12-3-13 5s5 10 10 8 4-8 0-8c-3 0-4 3-2 5M21 4c-1 3-5 3-9 4-4 2-4 7-1 9" fill="none" stroke="#ccc" strokeWidth="1.600" /> },
];

const pinnedTasks: Task[] = [
  { name: "Edge", art: <FaEdge x="1" y="1" size={22} color="#0f7ad8" /> },
  {
    name: "应用商店",
    art: (
      <>
        <path d="M2 7l20-2v17L2 20z" fill="#fff" />
        <path d="M8 6c0-5 6-5 7-1" fill="none" stroke="#fff" strokeWidth="1.500" />
        <path d="M6 10l5-.5V14H6zM12 9.500l5-.5v5h-5zM6 15h5v4l-5-.5zM12 15h5v4.500L12 19z" fill="#050d10" />
      </>
    ),
  },
  {
    name: "文件资源管理器",
    art: (
      <>
        <path d="M1 3h9l1 2h12v16H1z" fill="#fbe08b" />
        <path d="M5 13h14v8h-4v-4H9v4H5z" fill="#35aee2" />
      </>
    ),
  },
  {
    name: "360浏览器",
    open: true,
    art: (
      <>
        <circle cx="12" cy="12" r="10" fill="#54b82a" stroke="#d8f0c8" strokeWidth="1.500" />
        <path d="M7 12h10c0-6-10-7-10 0s7 6 9 3" fill="none" stroke="#fff" strokeWidth="2.500" />
        <path d="M3 22C2 14 12 3 22 1" fill="none" stroke="#2f8a18" strokeWidth="1.300" />
      </>
    ),
  },
  { name: "GGJ2013", open: true, active: true, art: logoArt },
  { name: "广联达云", open: true, art: <path d="M18 6C12 2 4 6 4 13s8 10 13 6 2-9-3-8c3 1 2 5-1 5-5 0-5-7 0-8 5 0 8-2 9-6-2 2-3 2-4 4z" fill="#2297e8" stroke="#38b4f5" /> },
  {
    name: "笔记",
    open: true,
    art: (
      <>
        <rect x="1" y="1" width="22" height="22" rx="3" fill="#f4a81d" />
        <path d="M5 8l9-3 3 12-9 3z" fill="#fff8e8" />
        <path d="M8 10l5-1.500M8.500 13l5-1.500M9 16l5-1.500" stroke="#a87" />
        <path d="M22 3l-7 10-1 3 3-2 6-9z" fill="#a33d14" />
      </>
    ),
  },
];

const TaskGroup = ({ tasks }: { tasks: Task[] }) => (
  <div className="flex h-full gap-px">
    {tasks.map((t) => (
      <button key={t.name} aria-label={t.name} className={`flex h-full w-12 flex-col items-center ${t.active ? "bg-[#363f42]" : ""}`}>
        <svg viewBox="0 0 24 24" className="my-auto h-6 w-6">
          {t.art}
        </svg>
        {t.open && <span className={`h-0.5 bg-[#76b9ed] ${t.active ? "w-full" : "w-10"}`} />}
      </button>
    ))}
  </div>
);

const Taskbar = () => (
  <div className="flex h-10 shrink-0 items-center bg-[#030b0f] text-white">
    <button aria-label="开始" className="flex h-full w-12 items-center justify-center bg-black">
      <FaWindows className="h-4 w-4" />
    </button>
    <label className="flex h-full w-[344px] items-center bg-[#323232] pr-3 pl-[9px]">
      <span className="h-[21px] w-[21px] rounded-full border-[3px] border-white" />
      <input aria-label="搜索" placeholder="在这里输入你要搜索的内容" className="ml-1.5 min-w-0 flex-1 bg-transparent text-sm outline-none placeholder:text-[#9a9a9a]" />
      <svg viewBox="0 0 12 18" className="h-[18px] w-3" aria-hidden="true">
        <path d="M3.500 1h5v10h-5zM1 9v4.500h10V9M6 14v3M3 17h6" fill="none" stroke="#aaa" />
      </svg>
    </label>
    <div className="ml-0.5 flex h-full flex-1 gap-1.5">
      <TaskGroup tasks={toolTasks} />
      <TaskGroup tasks={pinnedTasks} />
    </div>
    <div className="mr-5 text-center text-xs leading-[17px]">
      56%
      <br />
      CPU使用
    </div>
    <svg viewBox="0 0 140 20" className="h-5 w-[140px]" fill="none" stroke="#eee" strokeWidth="1.300" aria-hidden="true">
      <path d="M1 13l5-5 5 5" />
      <path d="M30 6.500h12v8H30zM43 9v3M32 9h8v3h-8zM24 7v3h4V7M26 10v3h4M25 4v3M27 4v3" />
      <path d="M50 17c0-8 4-12 12-12M54 17c0-5 3-8 8-8M58 17c0-2 1-4 4-4" stroke="#bbb" />
      <path d="M60 15.500h2v1.500h-2z" fill="#eee" />
      <path d="M71 8h3l4-4v12l-4-4h-3zM80.500 7c2 2 2 4 0 6M83 5c3 3 3 7 0 10M85.500 3c4 4 4 10 0 14" />
      <path d="M95 4.500h22v11H95zM98 8h16M98 10.500h16M101 13h10" />
      <path d="M97 8h18M97 10.500h18" strokeDasharray="1 1" stroke="#030b0f" />
      <path d="M128.500 6.500h11v6h-11zM134 3v14" strokeWidth="1.600" />
    </svg>
    <Sogou className="ml-3 h-4 w-4" />
    <div className="mr-4 ml-5 text-center text-xs leading-[18px]">
      10:46
      <br />
      2017/9/10
    </div>
    <button aria-label="通知" className="relative mr-2 h-7 w-8">
      <svg viewBox="0 0 32 28" className="h-7 w-8">
        <path d="M3 3h16v12H8l-3 3v-3H3z" fill="#fff" />
        <path d="M6 6.500h10M6 9h10M6 11.500h7" stroke="#111" />
        <rect x="7.500" y="10.500" width="21" height="16" rx="8" fill="#3c3c3c" stroke="#888" />
        <text x="18" y="23" fontSize="12" fontWeight="700" fill="#fff" textAnchor="middle" fontFamily="Liberation Sans">20</text>
      </svg>
    </button>
    <span className="mr-1 h-full w-px bg-[#555]" />
  </div>
);

const App = () => {
  return (
    <div className="relative flex h-screen flex-col overflow-hidden bg-[#f0f0f0] font-['Noto_Sans','Noto_Sans_CJK_SC',sans-serif] text-xs text-black">
      <TitleBar />
      <MenuBar />
      <Gauge />
      <MainTools />
      <div className="flex min-h-0 flex-1 gap-[5px]">
        <Sidebar />
        <main className="flex min-w-0 flex-1 flex-col">
          <EditTools />
          <ComponentTools />
          <div className="flex h-[26px] shrink-0 justify-start pl-[413px]">
            <Bar className="h-6 w-[31px]">
              <Grip />
            </Bar>
          </div>
          <DrawTools />
          <div className="relative min-h-0 flex-1 overflow-hidden bg-black">
            <Scene />
            <ControlPanel />
          </div>
          <SnapBar />
          <RebarPane />
        </main>
      </div>
      <StatusBar />
      <ImeBar />
      <Taskbar />
    </div>
  );
};

export default App;
